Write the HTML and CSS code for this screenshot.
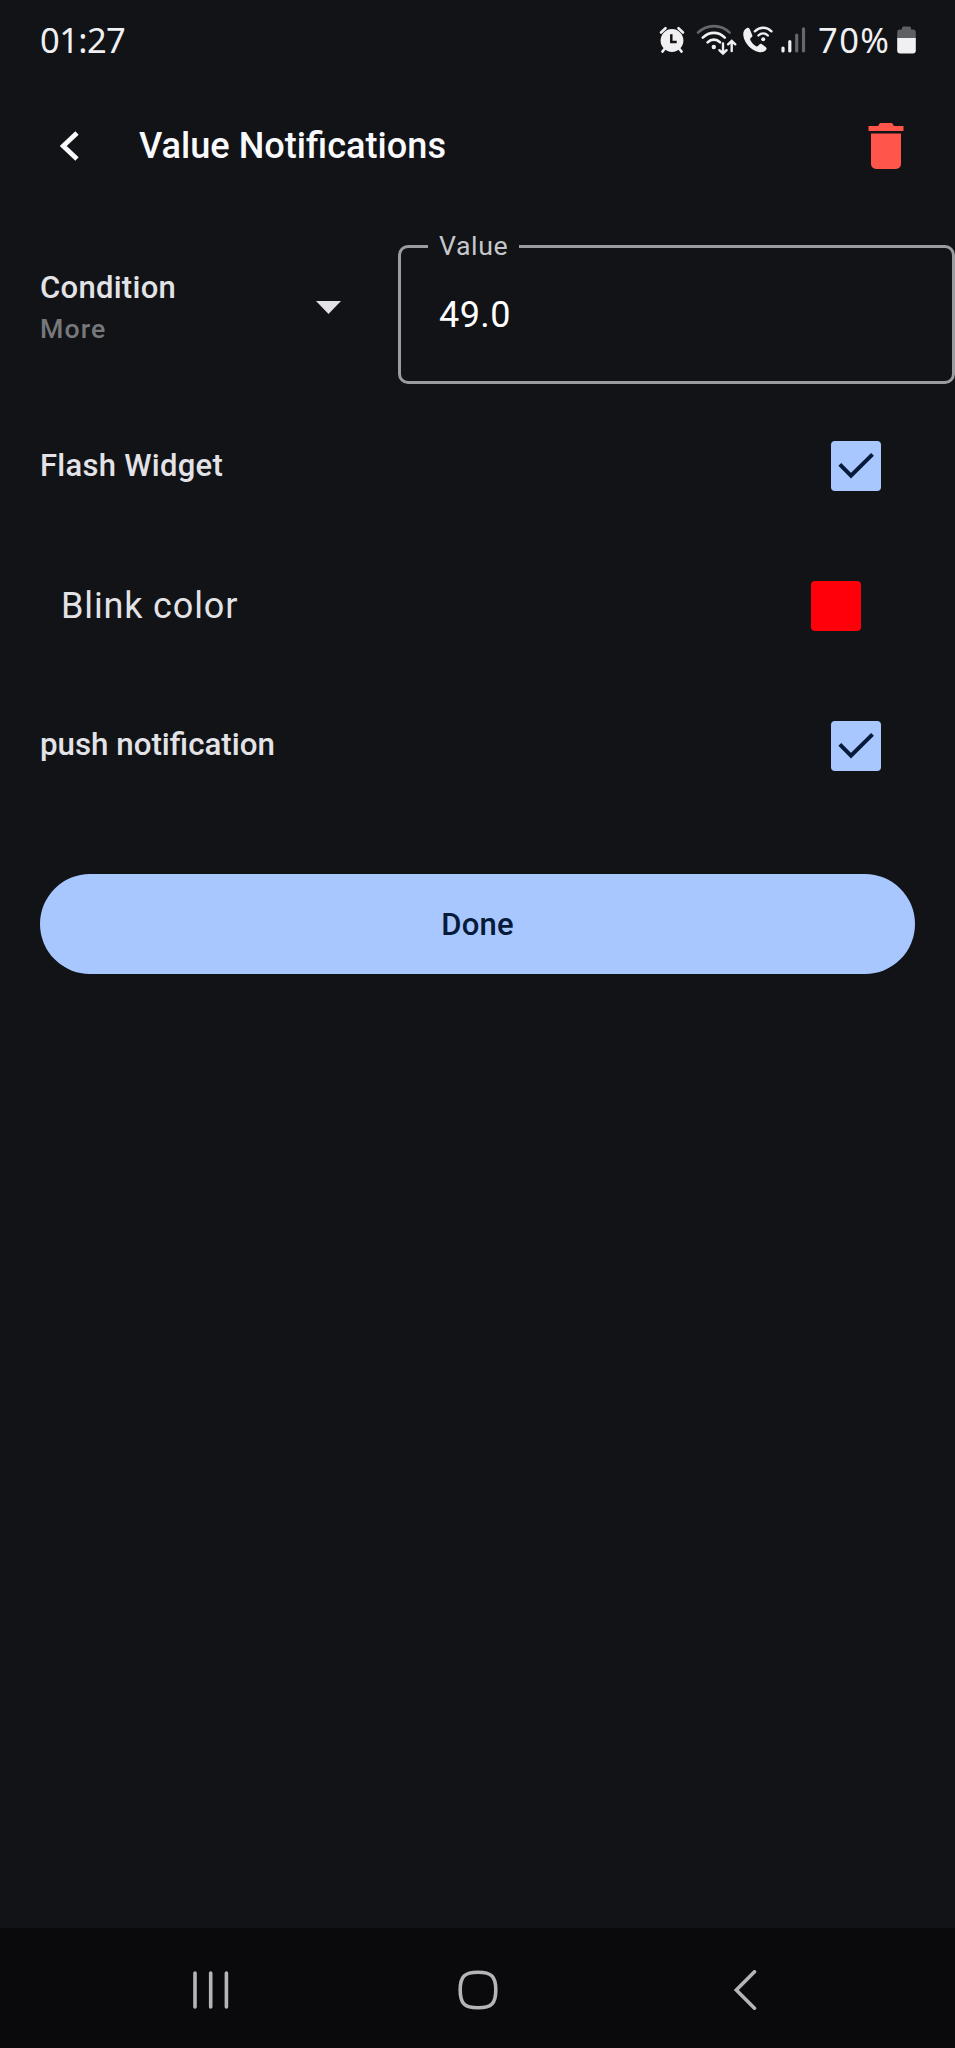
FILE: index.html
```html
<!DOCTYPE html>
<html lang="en">
<head>
<meta charset="utf-8">
<title>Value Notifications</title>
<link rel="stylesheet" href="styles.css">
</head>
<body>
<div class="screen">
  <div class="status">
    <span class="clock">01:27</span>
    <div class="tray">
      <svg class="alarm" width="26" height="28" viewBox="0 0 26 28">
        <path d="M2 6.5 6.5 2.2M24 6.5 19.5 2.2" stroke="#f0f0f2" stroke-width="2.6" stroke-linecap="round"/>
        <path d="M5.5 23 3.4 25.6M20.5 23l2.1 2.6" stroke="#f0f0f2" stroke-width="2.6" stroke-linecap="round"/>
        <circle cx="13" cy="14.5" r="11.4" fill="#f0f0f2"/>
        <path d="M12.3 8.3v7.7h5.4" fill="none" stroke="#111317" stroke-width="2.5"/>
      </svg>
      <svg class="wifi" width="42" height="32" viewBox="0 0 42 32" fill="none" stroke-linecap="round">
        <path d="M2 8.6C11-.1 25-.1 33.6 8.6" stroke="#66676a" stroke-width="2.6"/>
        <path d="M6.8 13.6C13.2 7.2 22.6 7.2 28.8 13.6" stroke="#f0f0f2" stroke-width="2.7"/>
        <path d="M11.6 18.4c3.7-3.6 8.8-3.6 12.4-.2" stroke="#f0f0f2" stroke-width="2.7"/>
        <circle cx="17.8" cy="23" r="2.2" fill="#f0f0f2"/>
        <path d="M27 19.5v10M23.4 26.2l3.6 3.5 3.6-3.5M35.7 27V17M32.1 20.3l3.6-3.5 3.6 3.5" stroke="#f0f0f2" stroke-width="2.4"/>
      </svg>
      <svg class="call" width="31" height="28" viewBox="0 0 31 28">
        <path d="M4.6 2.2C1.6 3.7.7 7 1.6 11c1.7 7.3 8.1 13.6 15 15 3.2.7 6.4-.2 7.7-2.5.6-1 .3-1.9-.6-2.6l-3.8-2.7c-.9-.6-1.8-.4-2.5.3l-1.6 1.6c-.5.5-1 .5-1.7.1-2.6-1.6-4.6-3.6-5.8-6.2-.3-.7-.2-1.2.3-1.7l1.2-1.2c.7-.7.8-1.4.4-2.2L7.8 3.2C7 1.8 5.9 1.5 4.6 2.2Z" fill="#f0f0f2"/>
        <path d="M12.8 5.4c5-4.9 11.8-4.9 16.7 0M16.4 9.5c2.8-2.7 6.7-2.7 9.5 0" fill="none" stroke="#f0f0f2" stroke-width="2.3" stroke-linecap="round"/>
        <circle cx="21.2" cy="13.2" r="2" fill="#f0f0f2"/>
      </svg>
      <svg class="signal" width="25" height="28" viewBox="0 0 25 28" stroke-width="3.2" stroke-linecap="round">
        <path d="M2 22v3M8.8 15.500V25" stroke="#f0f0f2"/>
        <path d="M15.7 9v16M22.5 2.800V25" stroke="#66676a"/>
      </svg>
      <span class="percent">70%</span>
      <svg class="battery" width="19" height="28" viewBox="0 0 19 28">
        <path d="M5 3.500V2a1.500 1.500 0 0 1 1.500-1.500h6A1.500 1.500 0 0 1 14 2v1.500h2.500a2.500 2.500 0 0 1 2.300 2.500v7H.2V6a2.500 2.500 0 0 1 2.300-2.500Z" fill="#5f6063"/>
        <path d="M.2 12h18.600v12.500a3 3 0 0 1-3 3H3.200a3 3 0 0 1-3-3Z" fill="#f0f0f2"/>
      </svg>
    </div>
  </div>

  <header class="appbar">
    <svg class="back" width="20" height="30" viewBox="0 0 20 30"><path d="M17 1.900 3.200 15 17 28.100" fill="none" stroke="#fafafc" stroke-width="4.800"/></svg>
    <h1 class="title">Value Notifications</h1>
    <svg class="trash" width="36" height="46" viewBox="0 0 36 46" fill="#ff554b">
      <path d="M.5 3H10l2-3h12l2 3h9.500v5H.5ZM3 10.500h30V41a5 5 0 0 1-5 5H8a5 5 0 0 1-5-5Z"/>
    </svg>
  </header>

  <main>
    <div class="condition-row">
      <div class="condition">
        <div class="condition-text">
          <div class="label">Condition</div>
          <div class="choice">More</div>
        </div>
        <svg class="caret" width="25" height="13" viewBox="0 0 25 13"><path d="M0 0h25L12.500 13Z" fill="#e3e2e6"/></svg>
      </div>
      <fieldset class="field">
        <legend>Value</legend>
        <div class="value">49.0</div>
      </fieldset>
    </div>

    <div class="row">
      <span class="label">Flash Widget</span>
      <span class="box"><svg width="50" height="50" viewBox="0 0 50 50"><path d="M8.800 23.300 20 34.700 41.500 13.300" fill="none" stroke="#061a3a" stroke-width="4"/></svg></span>
    </div>
    <div class="row nested">
      <span class="sub">Blink color</span>
      <span class="box red"></span>
    </div>
    <div class="row">
      <span class="label push">push notification</span>
      <span class="box"><svg width="50" height="50" viewBox="0 0 50 50"><path d="M8.800 23.300 20 34.700 41.500 13.300" fill="none" stroke="#061a3a" stroke-width="4"/></svg></span>
    </div>
    <button class="done">Done</button>
  </main>

  <nav class="nav">
    <svg width="40" height="40" viewBox="0 0 40 40" stroke="#b5b5b7" stroke-width="3.600" stroke-linecap="round"><path d="M3 3v34M18.700 3v34M34.400 3v34"/></svg>
    <svg width="40" height="40" viewBox="0 0 40 40" fill="none" stroke="#b5b5b7" stroke-width="3.600"><path d="M20 2.200C33.500 2.200 37.800 6.500 37.800 20S33.500 37.800 20 37.800 2.200 33.500 2.200 20 6.500 2.200 20 2.200Z"/></svg>
    <svg width="40" height="40" viewBox="0 0 40 40" fill="none" stroke="#b5b5b7" stroke-width="3.600" stroke-linecap="round"><path d="M31.500 1.800 13.300 20l18.200 18.200"/></svg>
  </nav>
</div>
</body>
</html>
```
FILE: styles.css
```css
* { box-sizing: border-box; }
body { margin: 0; background: #111317; }
svg { display: block; flex: none; }

.screen {
  width: 955px;
  height: 2048px;
  display: flex;
  flex-direction: column;
  background: #111317;
  color: #e3e2e6;
  font-family: Roboto, sans-serif;
  overflow: hidden;
}

.status {
  height: 80px;
  padding: 0 39px 0 40px;
  display: flex;
  align-items: center;
  justify-content: space-between;
  color: #f0f0f2;
  font: 34.5px/40px "Noto Sans", sans-serif;
}
.clock { letter-spacing: -0.6px; }
.tray { display: flex; align-items: center; }
.wifi { margin-left: 11px; }
.call { margin-left: 4px; }
.signal { margin-left: 8px; }
.percent { margin-left: 12px; width: 72px; letter-spacing: 1.4px; white-space: nowrap; }
.battery { margin-left: 7px; }

.appbar {
  height: 132px;
  padding: 0 51px 0 60px;
  display: flex;
  align-items: center;
}
.title {
  margin: 0 0 0 59px;
  flex: 1;
  font-size: 36.15px;
  font-weight: 500;
  line-height: 42px;
  color: #fafafc;
}

main { flex: 1; }

.condition-row {
  height: 184px;
  padding-top: 18px;
  display: flex;
  align-items: flex-start;
}
.condition {
  width: 398px;
  height: 154px;
  padding: 0 57px 0 40px;
  display: flex;
  align-items: center;
  justify-content: space-between;
}
.condition-text { padding-top: 4px; }
.label {
  font-size: 31px;
  font-weight: 500;
  line-height: 40px;
  letter-spacing: 0.28px;
}
.push { font-size: 31.3px; letter-spacing: 0; padding-bottom: 2px; }
.choice {
  font-size: 26.7px;
  font-weight: 500;
  line-height: 42px;
  letter-spacing: 1.1px;
  color: #77787b;
}
.field {
  width: 557px;
  height: 154px;
  margin: 0;
  padding: 0 0 0 38px;
  border: 3px solid #9b9ca0;
  border-radius: 10px;
  min-width: 0;
}
.field legend {
  margin-left: -11px;
  padding: 0 11px;
  font-size: 26.7px;
  line-height: 32px;
  letter-spacing: 0.6px;
  color: #c6c6ca;
}
.value {
  margin-top: 32px;
  font-size: 36px;
  line-height: 42px;
  letter-spacing: 0.4px;
  color: #fff;
}

.row {
  height: 140px;
  padding: 0 74px 0 40px;
  display: flex;
  align-items: center;
  justify-content: space-between;
}
.nested { padding: 0 94px 0 61px; }
.sub { font-size: 36px; line-height: 42px; letter-spacing: 0.85px; }
.box {
  width: 50px;
  height: 50px;
  border-radius: 4px;
  background: #a8c7ff;
}
.red { background: #ff000a; }

.done {
  display: block;
  width: 875px;
  height: 100px;
  margin: 58px 40px 0;
  padding: 1px 0 0;
  border: 0;
  border-radius: 50px;
  background: #a8c7ff;
  color: #061a3a;
  font: 500 31px/40px Roboto, sans-serif;
  letter-spacing: 0.2px;
}

.nav {
  height: 120px;
  padding: 3px 192px 0;
  display: flex;
  align-items: center;
  justify-content: space-between;
  background: #0a0a0c;
}
```
